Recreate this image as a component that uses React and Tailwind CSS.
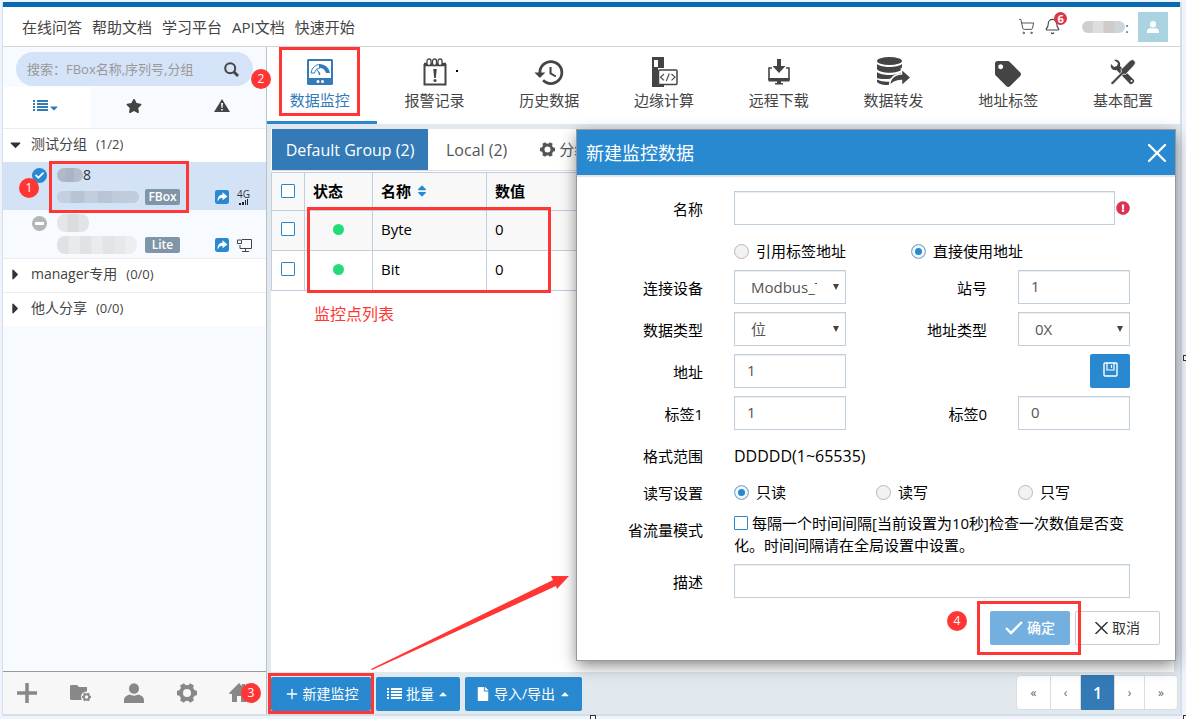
import { clsx } from 'clsx';
import { FaCaretDown, FaCaretRight, FaCaretUp, FaCheck, FaExclamationCircle, FaFile, FaSort, FaStar, FaTag } from 'react-icons/fa';
import { MdHistory } from 'react-icons/md';
import { Bell, Plus, ShoppingCart, X } from 'lucide-react';

const links = ['在线问答', '帮助文档', '学习平台', 'API文档', '快速开始'];

const navItems = [
  { label: '数据监控', icon: GaugeIcon, active: true },
  { label: '报警记录', icon: AlarmIcon },
  { label: '历史数据', icon: HistoryIcon },
  { label: '边缘计算', icon: EdgeIcon },
  { label: '远程下载', icon: DownloadIcon },
  { label: '数据转发', icon: ForwardIcon },
  { label: '地址标签', icon: TagIcon },
  { label: '基本配置', icon: ToolsIcon },
];

const rows = [
  { name: 'Byte', value: 0 },
  { name: 'Bit', value: 0 },
];

function GaugeIcon() {
  return (
    <svg width="26" height="26" viewBox="0 0 26 26" fill="currentColor">
      <path fillRule="evenodd" d="M1 0h24l1 1v24l-1 1H1l-1-1V1zM2 2v17h22V2z" />
      <path d="M4 14C5 8.500 8.500 5.500 13 5.500V9c-2.500 0-4.500 2-5.500 5z" fill="none" stroke="currentColor" strokeWidth="1" />
      <path d="M12 5c6 0 10 3.500 11 9h-4c-.8-3-3-5-6-5l-1-.5z" />
      <path d="M8.500 8.500L13.200 14v2h-1.400v-1.500z" />
      <circle cx="11" cy="22.500" r="1.500" fill="#fff" />
      <circle cx="15.500" cy="22.500" r="1.500" fill="#fff" />
    </svg>
  );
}

function AlarmIcon() {
  return (
    <svg width="24" height="28" viewBox="0 0 24 28" fill="none" stroke="currentColor">
      <path d="M1.500 6v20.500h21V6" strokeWidth="2" />
      <path d="M1 6.500h22" strokeWidth="3.500" />
      {[4, 9.5, 15].map((x) => (
        <rect key={x} x={x} y="1" width="4" height="6.500" rx="2" strokeWidth="1.300" fill="#fff" />
      ))}
      <path d="M10.200 11h3.600l-1 9h-1.600z" fill="currentColor" stroke="none" />
      <circle cx="12" cy="22.500" r="1.500" fill="currentColor" stroke="none" />
    </svg>
  );
}

function HistoryIcon() {
  return <MdHistory size={33} />;
}

function EdgeIcon() {
  return (
    <svg width="27" height="30" viewBox="0 0 27 30" fill="currentColor">
      <path fillRule="evenodd" d="M1 0h12v11H7v17h6v2H1zM3 3v7h4V3z" />
      <rect x="7.500" y="13" width="18.500" height="14.500" rx="1" fill="#fff" stroke="currentColor" strokeWidth="1.500" />
      <path d="M13 17l-3.500 3.200L13 23.400M20.500 17l3.500 3.200-3.500 3.200M18.300 16.500l-3 7.500" fill="none" stroke="currentColor" strokeWidth="1.100" />
    </svg>
  );
}

function DownloadIcon() {
  return (
    <svg width="24" height="28" viewBox="0 0 24 28" fill="currentColor">
      <path d="M10 1h4v7h4.500L12 15 5.500 8H10z" />
      <path d="M5 10H2v11.500h20V10h-3" fill="none" stroke="currentColor" strokeWidth="1.600" />
      <path d="M1.500 20h21v3.500h-21zM10 23h4v2h2v1.500H8V25h2z" />
    </svg>
  );
}

function ForwardIcon() {
  return (
    <svg width="34" height="30" viewBox="0 0 34 30" fill="currentColor">
      <ellipse cx="12.500" cy="4" rx="12.500" ry="4" />
      <path d="M0 7c4 4 21 4 25 0v5c-3 5-22 5-25 0z" />
      <path d="M0 15c4 4 21 4 25 0v4c-4 3-21 4-25 2z" />
      <path d="M0 22.500c4 2 9 2.500 13 2L12 28C7 28 2 27.500 0 25z" />
      <path d="M12.500 29.500c0-8 5-12 12-12.500v-5l9.500 8.500-9.500 8.500v-5.500c-5 0-9 1.500-12 6z" stroke="#fff" strokeWidth="1.500" />
    </svg>
  );
}

function TagIcon() {
  return <FaTag size={26} className="mt-1" />;
}

function ToolsIcon() {
  return (
    <svg width="26" height="26" viewBox="0 0 26 26" fill="currentColor">
      <path d="M4 1c4-1 7 2 6 6l14 14c1 2-2 5-4 4L6.500 11C3 12 0 9 1 5l3 3 3-1 1-3z" />
      <circle cx="21.500" cy="22" r="1" fill="#fff" />
      <path d="M20 1.500c3-2.500 7 1 4.500 4.500L15.500 15.500l-2.200-.5L3 25.500H1V23.500L11.500 13l-.5-2.500z" stroke="#fff" strokeWidth=".8" />
    </svg>
  );
}

function GearIcon({ size }) {
  return (
    <svg width={size} height={size} viewBox="0 0 20 20" fill="none" stroke="currentColor">
      <circle cx="10" cy="10" r="6" strokeWidth="4" />
      {[0, 60, 120, 180, 240, 300].map((deg) => (
        <path key={deg} d="M7.200 3l.6-3h4.400l.6 3z" fill="currentColor" stroke="none" transform={`rotate(${deg + 30} 10 10)`} />
      ))}
    </svg>
  );
}

function UserIcon({ size }) {
  return (
    <svg width={size} height={size} viewBox="0 0 20 20" fill="currentColor">
      <ellipse cx="10" cy="5.500" rx="5" ry="5.300" />
      <path d="M0 20v-3c0-3 3-5 6-5.500 2 1.500 6 1.500 8 0 3 .5 6 2.500 6 5.500v3z" />
    </svg>
  );
}

function ListIcon() {
  return (
    <svg width="15" height="12" viewBox="0 0 15 12" fill="currentColor">
      {[0, 3, 6, 9].map((y) => (
        <path key={y} d={`M0 ${y}h2v2H0zM4 ${y}h11v2H4z`} />
      ))}
    </svg>
  );
}

function SearchIcon() {
  return (
    <svg width="15" height="15" viewBox="0 0 15 15" fill="none" stroke="currentColor" strokeWidth="2">
      <circle cx="6.200" cy="6.200" r="5" />
      <path d="M10 10l4 4" strokeWidth="2.800" />
    </svg>
  );
}

function WarnIcon() {
  return (
    <svg width="16" height="13" viewBox="0 0 16 13">
      <path d="M8 0l8 13H0z" fill="#444" />
      <path d="M7 4h2l-.5 5h-1zM7.200 10h1.600v1.500H7.200z" fill="#f7fbff" />
    </svg>
  );
}

function ShareIcon() {
  return (
    <svg width="14" height="14" viewBox="0 0 13 13">
      <rect width="13" height="13" rx="2" fill="#2889d0" />
      <path d="M2.500 11C2 6.500 4 4.500 7 4.500V2l4.500 4L7 9.500V7.200C5 7.200 3.500 8 2.500 11z" fill="#fff" />
    </svg>
  );
}

function SignalIcon() {
  return (
    <span className="flex flex-col text-[10px] leading-[10px] text-[#333]">
      4G
      <svg width="12" height="6" viewBox="0 0 12 6" fill="#222">
        <path d="M2 4h2v2H2zM5 3h2v3H5zM8 1h1v5H8zM10 0h1v6h-1z" />
      </svg>
    </span>
  );
}

function MonitorIcon() {
  return (
    <svg width="15" height="13" viewBox="0 0 15 13" fill="none" stroke="#444">
      <path d="M5 .5h9.500v9H3V6M.5 1h4v3.500h-4zM8.500 9.500v3M5 12.500h7" />
    </svg>
  );
}

function FolderIcon() {
  return (
    <svg width="22" height="18" viewBox="0 0 22 18">
      <path d="M0 2l1-1h6l2 2h8v13H1l-1-1z" fill="#888" />
      <circle cx="16.500" cy="13" r="5.500" fill="#f7f7f7" />
      <svg x="12" y="8.500" width="9" height="9"><g color="#888"><GearIcon size={9} /></g></svg>
    </svg>
  );
}

function HomeIcon() {
  return (
    <svg width="20" height="20" viewBox="0 0 20 20" fill="#888">
      <path d="M10 0l3 3V1h3v5l4 4-1 1h-2v8h-5v-6H8v6H3v-8H1l-1-1z" />
    </svg>
  );
}

function SaveIcon() {
  return (
    <svg width="15" height="15" viewBox="0 0 15 15" fill="none" stroke="#fff">
      <rect x="1" y="1" width="13" height="13" rx="1" strokeWidth="1.400" />
      <path d="M4 1v7h7V1M8.500 3v3" strokeWidth="1.200" />
    </svg>
  );
}

// Pixelated cover over private names
function Mosaic({ width, height, colors }) {
  return (
    <svg width={width} height={height} className="block overflow-hidden rounded-lg">
      {colors.map((c, i) => (
        <rect key={i} x={(i * width) / colors.length} width={width / colors.length + 1} height={height} fill={c} />
      ))}
    </svg>
  );
}

function Step({ n, className }) {
  return (
    <span className={clsx('absolute z-20 flex size-5 items-center justify-center rounded-full bg-[#ff3634] text-xs text-white', className)}>
      {n}
    </span>
  );
}

function Outline({ className }) {
  return <span className={clsx('pointer-events-none absolute z-10 border-3 border-[#ff3634]', className)} />;
}

function Header() {
  return (
    <header className="flex h-[45px] items-center justify-between border-t-5 border-b border-t-[#0868b2] border-b-[#d5d5d5] bg-white pr-3 pl-[19px]">
      <nav className="flex gap-[10px] text-[#444]">
        {links.map((l) => (
          <a key={l} href="#">{l}</a>
        ))}
      </nav>
      <div className="flex items-center">
        <button aria-label="购物车"><ShoppingCart size={17} strokeWidth={1.4} color="#555" /></button>
        <button aria-label="通知" className="relative ml-[9px]">
          <Bell size={17} strokeWidth={1.6} color="#444" />
          <span className="absolute -top-[6px] left-[10px] flex size-[13px] items-center justify-center rounded-full bg-[#dc3545] text-[11px] font-bold text-white">6</span>
        </button>
        <div className="ml-[21px] flex items-center text-[#2b72bd]">
          <Mosaic width={43} height={12} colors={['#cfcfcf', '#dedede', '#d0cbc8', '#d0d5da']} />:
        </div>
        <button aria-label="用户" className="ml-[9px] flex size-[30px] items-center justify-center bg-[#a9d3e1] text-white">
          <UserIcon size={12} />
        </button>
      </div>
    </header>
  );
}

function Group({ open, name, count }) {
  return (
    <div className="flex h-[34px] items-center border-t border-[#eaedf0] bg-white pb-[3px] pl-1 text-sm text-[#444]">
      <span className="w-6 text-[#333]">{open ? <FaCaretDown size={17} /> : <FaCaretRight size={17} />}</span>
      {name}
      <span className="ml-[9px] text-[13px]">{count}</span>
    </div>
  );
}

function Device({ selected, tag, top, bottom, tail, end, status }) {
  return (
    <div className={clsx('relative flex h-12 pl-[29px]', selected && 'bg-[#d4e2f6]')}>
      <span className="mt-[6px] w-[25px]">{status}</span>
      <div className="flex flex-1 flex-col gap-[6px] pt-[5px]">
        <div className="flex h-4 items-center text-sm text-[#333]">{top}{tail}</div>
        <div className="flex h-4 items-center">
          <div className="w-[84px]">{bottom}</div>
          <span className="ml-1 flex h-4 w-[35px] items-center justify-center rounded-xs bg-[#8096a8] text-xs font-semibold text-white">{tag}</span>
        </div>
      </div>
      <div className="mt-[27px] mr-3 flex h-4 items-center gap-2">
        <ShareIcon />
        <span className="w-[17px]">{end}</span>
      </div>
      {selected && <Outline className="top-[-1px] left-[46px] h-[52px] w-[140px]" />}
      {selected && <Step n={1} className="top-4 left-4" />}
    </div>
  );
}

function Sidebar() {
  return (
    <aside className="relative flex w-[264px] flex-none flex-col border-r border-[#b9c0c6] bg-[#f7fbff]">
      <div className="relative mx-[13px] mt-[5px] flex h-[34px] items-center rounded-full bg-[#d5e3f8] pr-[14px] pl-[11px] text-[#444]">
        <input aria-label="搜索" placeholder="搜索：FBox名称,序列号,分组" className="min-w-0 flex-1 text-[13px] outline-none placeholder:text-[#999]" />
        <button aria-label="搜索"><SearchIcon /></button>
        <Step n={2} className="top-[17px] left-[235px]" />
      </div>
      <div className="mt-px grid h-[41px] grid-cols-3 text-[#444]">
        <button aria-label="列表" className="flex items-center justify-center bg-white pb-1 text-[#337ab7]">
          <ListIcon /><FaCaretDown size={12} className="mt-1" />
        </button>
        <button aria-label="收藏" className="flex items-center justify-center pb-1"><FaStar size={16} /></button>
        <button aria-label="报警" className="flex items-center justify-center pb-1"><WarnIcon /></button>
      </div>
      <Group open name="测试分组" count="(1/2)" />
      <Device
        selected
        tag="FBox"
        tail="8"
        status={<span className="flex size-[15px] items-center justify-center rounded-full bg-[#2889d0] text-white"><FaCheck size={9} /></span>}
        top={<Mosaic width={26} height={14} colors={['#aeb9c9', '#a9b5c6', '#b3bdcc']} />}
        bottom={<Mosaic width={82} height={12} colors={['#c4cfe0', '#b8c3d4', '#c2cddd', '#b9c5d6', '#bfcadb', '#c0cbdc']} />}
        end={<SignalIcon />}
      />
      <Device
        tag="Lite"
        status={<span className="flex size-[15px] items-center justify-center rounded-full bg-[#b5b5b5]"><span className="h-[3px] w-[9px] bg-white" /></span>}
        top={<Mosaic width={32} height={18} colors={['#e4e6e8', '#dadcde', '#e2e4e6']} />}
        bottom={<Mosaic width={80} height={18} colors={['#dfe1e3', '#e8eaec', '#e0e2e4', '#e9ebed', '#e2e4e6', '#e6e8ea', '#eceef0']} />}
        end={<MonitorIcon />}
      />
      <Group name="manager专用" count="(0/0)" />
      <Group name="他人分享" count="(0/0)" />
      <div className="mt-auto flex h-[43px] items-center justify-between border-t border-[#999] bg-[#f7f7f7] pr-[5px] pb-px pl-[14px] text-[#888]">
        <button aria-label="添加">
          <svg width="20" height="20" viewBox="0 0 20 20" stroke="currentColor" strokeWidth="3.500"><path d="M10 0v20M0 10h20" /></svg>
        </button>
        <button aria-label="分组管理"><FolderIcon /></button>
        <button aria-label="用户"><UserIcon size={20} /></button>
        <button aria-label="设置"><GearIcon size={20} /></button>
        <button aria-label="首页" className="relative pr-3">
          <HomeIcon />
          <Step n={3} className="top-0 left-3" />
        </button>
      </div>
    </aside>
  );
}

function MainNav() {
  return (
    <nav className="flex h-[77px] flex-none gap-[5px] bg-white">
      {navItems.map(({ label, icon: Icon, active }) => (
        <a
          key={label}
          href="#"
          className={clsx(
            'relative flex flex-1 flex-col items-center border-b-3 pt-[9px] pr-1',
            active ? 'border-[#2889d0] text-[#337ab7]' : 'border-transparent text-[#444]'
          )}
        >
          <span className="flex h-8 items-center">
            <Icon />
          </span>
          <span className="mt-px">{label}</span>
          {active && <Outline className="top-0 left-3 h-[69px] w-[81px]" />}
          {label === '报警记录' && <span className="absolute top-[23px] right-[34px] size-[2px] bg-black" />}
        </a>
      ))}
    </nav>
  );
}

function Check({ label }) {
  return <input type="checkbox" aria-label={label} className="block size-[14px] appearance-none rounded-[1px] border border-[#2889d0] bg-white" />;
}

function DataTable() {
  return (
    <div className="relative">
      <table className="w-full table-fixed border-collapse text-left text-black">
        <thead>
          <tr className="h-[38px] bg-[#f8f8f8]">
            <th className="w-[33px] border border-[#bfcfde] pb-[2px] pl-[9px]"><Check label="全选" /></th>
            <th className="w-[68px] border border-[#bfcfde] pb-px pl-2">状态</th>
            <th className="w-[114px] border border-[#bfcfde] pb-px pl-2">
              <span className="flex items-center gap-1">名称<FaSort size={14} color="#2889d0" /></span>
            </th>
            <th className="border border-[#bfcfde] pb-px pl-2">数值</th>
          </tr>
        </thead>
        <tbody>
          {rows.map((r) => (
            <tr key={r.name} className="h-10 odd:bg-[#f8f8f8]">
              <td className="border border-[#bfcfde] pb-1 pl-[9px]"><Check label={r.name} /></td>
              <td className="border border-[#bfcfde] pb-[2px]"><span className="mx-auto block size-[11px] rounded-full bg-[#22dd77]" /></td>
              <td className="border border-[#bfcfde] pb-[3px] pl-2">{r.name}</td>
              <td className="border border-[#bfcfde] pb-[3px] pl-2">{r.value}</td>
            </tr>
          ))}
        </tbody>
      </table>
      <Outline className="top-[35px] left-9 h-[86px] w-[244px]" />
    </div>
  );
}

function Toolbar() {
  return (
    <div className="flex h-[42px] flex-none items-start justify-between pr-[2px] pl-1 text-sm">
      <div className="mt-[5px] flex gap-[5px] text-white">
        <button className="relative flex h-[34px] w-[100px] items-center justify-center gap-[3px] rounded-xs bg-[#2889d0]">
          <Plus size={16} />新建监控
          <Outline className="top-[-4px] left-[-3px] h-[41px] w-[106px]" />
        </button>
        <button className="flex h-[34px] w-[84px] items-center justify-center gap-1 rounded-xs bg-[#2889d0]">
          <ListIcon />批量<FaCaretUp size={12} className="-ml-px" />
        </button>
        <button className="flex h-[34px] w-[117px] items-center justify-center gap-1 rounded-xs bg-[#2889d0]">
          <FaFile size={14} />导入/导出<FaCaretUp size={12} />
        </button>
      </div>
      <nav aria-label="分页" className="mt-[3px] flex h-[35px] divide-x divide-[#ddd] rounded border border-[#ddd] bg-white text-xs text-[#666]">
        <button className="w-[34px]">«</button>
        <button className="w-[30px]">‹</button>
        <button className="-my-px w-[34px] bg-[#337ab7] text-base font-semibold text-white">1</button>
        <button className="w-[30px]">›</button>
        <button className="w-[32px]">»</button>
      </nav>
    </div>
  );
}

function Row({ label, id, children, className, labelClass }) {
  return (
    <div className={clsx('grid grid-cols-[126px_1fr] items-center gap-x-[31px]', className)}>
      <label htmlFor={id} className={clsx('pt-[2px] text-right', labelClass)}>{label}</label>
      <div className="flex items-center justify-between">{children}</div>
    </div>
  );
}

function SideField({ label, id, children }) {
  return (
    <div className="flex items-center gap-[31px]">
      <label htmlFor={id} className="pt-[2px]">{label}</label>
      {children}
    </div>
  );
}

function TextInput({ id, value, className }) {
  return (
    <input
      id={id}
      defaultValue={value}
      className={clsx('h-[34px] border border-[#bfcfde] bg-white px-3 pb-[2px] text-[#555] shadow-[inset_0_1px_1px_rgba(0,0,0,0.075)] outline-none', className)}
    />
  );
}

function Select({ id, value }) {
  return (
    <span className="relative">
      <select id={id} className="block h-[34px] w-[112px] appearance-none border border-[#bfcfde] bg-white pr-7 pl-4 text-[#555] shadow-[inset_0_1px_1px_rgba(0,0,0,0.075)]">
        <option>{value}</option>
      </select>
      <svg width="6" height="6" viewBox="0 0 6 6" className="pointer-events-none absolute top-[14px] right-[7px]">
        <path d="M0 0h6L3 6z" fill="#444" />
      </svg>
    </span>
  );
}

function Radio({ name, label, checked, className }) {
  return (
    <label className={clsx('flex items-center gap-[7px]', className)}>
      <input
        type="radio"
        name={name}
        defaultChecked={checked}
        className="size-[15px] appearance-none rounded-full border border-[#b5b8bb] bg-[#f2f2f2] checked:border-[#9fb4c4] checked:bg-[#2889d0] checked:shadow-[inset_0_0_0_3px_#f4f8fb]"
      />
      {label}
    </label>
  );
}

function Dialog() {
  return (
    <section role="dialog" aria-label="新建监控数据" className="absolute top-[83px] right-[5px] z-10 w-[598px] bg-white text-black shadow-[0_0_0_1px_#999,0_5px_15px_rgba(0,0,0,0.5)]">
      <div className="flex h-[47px] items-center justify-between border-b-2 border-[#e5e5e5] bg-[#2889d0] pr-[2px] pl-[9px] text-lg text-white">
        <h2>新建监控数据</h2>
        <button aria-label="关闭"><X size={32} strokeWidth={1.7} /></button>
      </div>
      <form className="flex flex-col gap-2 pt-[14px] pr-[45px]">
        <Row label="名称" id="name">
          <TextInput id="name" className="w-[381px]" />
          <FaExclamationCircle size={14} color="#dc3350" className="shrink-0" />
        </Row>
        <div className="flex h-[29px] pt-[7px] pl-[157px]">
          <Radio name="mode" label="引用标签地址" className="w-[177px]" />
          <Radio name="mode" label="直接使用地址" checked />
        </div>
        <Row label="连接设备" id="device">
          <Select id="device" value="Modbus_TCP" />
          <SideField label="站号" id="station"><TextInput id="station" value="1" className="w-[112px]" /></SideField>
        </Row>
        <Row label="数据类型" id="type">
          <Select id="type" value="位" />
          <SideField label="地址类型" id="addrType"><Select id="addrType" value="0X" /></SideField>
        </Row>
        <Row label="地址" id="addr">
          <TextInput id="addr" value="1" className="w-[112px]" />
          <button type="button" aria-label="保存" className="flex h-[34px] w-10 items-center justify-center rounded-xs bg-[#2889d0] pb-[3px]"><SaveIcon /></button>
        </Row>
        <Row label="标签1" id="tag1">
          <TextInput id="tag1" value="1" className="w-[112px]" />
          <SideField label="标签0" id="tag0"><TextInput id="tag0" value="0" className="w-[112px]" /></SideField>
        </Row>
        <Row label="格式范围" className="h-[34px]"><span className="pt-[2px] text-base">DDDDD(1~65535)</span></Row>
        <Row label="读写设置" className="h-6">
          <Radio name="rw" label="只读" checked className="w-[142px]" />
          <Radio name="rw" label="读写" className="w-[142px]" />
          <Radio name="rw" label="只写" className="flex-1" />
        </Row>
        <Row label="省流量模式" id="saving" labelClass="pb-[10px]">
          <label htmlFor="saving" className="leading-[22px]">
            <input id="saving" type="checkbox" className="mr-1 inline-block size-[14px] appearance-none rounded-[1px] border border-[#2889d0] align-[-1px]" />
            每隔一个时间间隔[当前设置为10秒]检查一次数值是否变化。时间间隔请在全局设置中设置。
          </label>
        </Row>
        <Row label="描述" id="desc"><TextInput id="desc" className="w-full" /></Row>
      </form>
      <div className="flex justify-end gap-[5px] p-[15px] pt-[13px] text-sm">
        <button className="relative flex h-[34px] w-20 items-center justify-center gap-1 rounded-xs bg-[#73b0e0] font-medium text-white">
          <svg width="18" height="14" viewBox="0 0 18 14" fill="none" stroke="#fff" strokeWidth="2.400"><path d="M1 7l5 5L17 1" /></svg>
          确定
          <Outline className="top-[-10px] left-[-13px] h-[54px] w-[104px]" />
          <Step n={4} className="top-0 -left-[43px]" />
        </button>
        <button className="flex h-[34px] w-[85px] items-center justify-center gap-1 rounded-xs border border-[#ccc] text-[#333]">
          <svg width="13" height="12" viewBox="0 0 13 12" fill="none" stroke="currentColor" strokeWidth="1.500"><path d="M.5 0l12 12M12.500 0l-12 12" /></svg>
          取消
        </button>
      </div>
    </section>
  );
}

export default function App() {
  return (
    <div className="relative flex min-h-screen flex-col bg-[#eff3fb] pt-[2px] pr-1 pb-[3px] pl-[2px] font-['Open_Sans','Noto_Sans_CJK_SC',sans-serif] text-[15px] leading-[22px]">
      <div className="flex flex-1 flex-col border-r-2 border-b-2 border-l border-[#d3dfe9]">
        <Header />
        <div className="flex flex-1">
          <Sidebar />
          <main className="relative flex min-w-0 flex-1 flex-col bg-[#e1e8ee]">
            <MainNav />
            <div className="mt-[5px] mr-[6px] ml-1 flex-1 bg-white">
              <div className="mb-px flex h-[42px] border-b border-[#ddd] text-base text-[#555]">
                <button className="ml-px w-[156px] bg-[#337ab7] text-white">Default Group (2)</button>
                <button className="px-[18px]">Local (2)</button>
                <button className="flex items-center gap-1 pl-[15px] text-[15px]"><GearIcon size={15} />分组</button>
              </div>
              <DataTable />
              <p className="mt-[11px] ml-[43px] text-base text-[#ff3634]">监控点列表</p>
            </div>
            <Toolbar />
            <Dialog />
            {/* arrow from the toolbar button to the dialog */}
            <svg width="200" height="95" viewBox="0 0 200 95" className="absolute bottom-11 left-[104px] z-20" fill="#ff3634">
              <path d="M0 94l182-89-2-4h18l-12 13-1-3L1 95z" />
            </svg>
          </main>
        </div>
      </div>
      <span className="absolute bottom-[-2px] left-[590px] size-[6px] border border-[#333] bg-white" />
      <span className="absolute top-[355px] right-[-3px] size-[6px] border border-[#333] bg-white" />
      <span className="absolute right-[-3px] bottom-[-2px] size-[6px] border border-[#333] bg-white" />
    </div>
  );
}
